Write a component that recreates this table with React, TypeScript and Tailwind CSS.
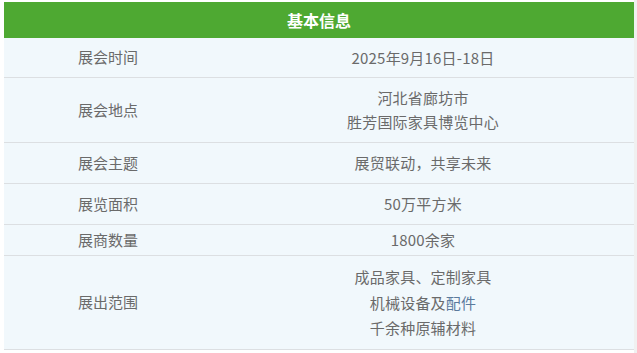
import React from "react";

type Row = { label: string; lines: React.ReactNode[]; h: string; lh: string };

const rows: Row[] = [
  { label: "展会时间", lines: ["2025年9月16日-18日"], h: "h-[40px]", lh: "leading-[24px]" },
  { label: "展会地点", lines: ["河北省廊坊市", "胜芳国际家具博览中心"], h: "h-[65px]", lh: "leading-[24px]" },
  { label: "展会主题", lines: ["展贸联动，共享未来"], h: "h-[41px]", lh: "leading-[24px]" },
  { label: "展览面积", lines: ["50万平方米"], h: "h-[41px]", lh: "leading-[24px]" },
  { label: "展商数量", lines: ["1800余家"], h: "h-[31px]", lh: "leading-[24px]" },
  {
    label: "展出范围",
    lines: [
      "成品家具、定制家具",
      <>
        机械设备及<span className="text-[#5b7a9c]">配件</span>
      </>,
      "千余种原辅材料",
    ],
    h: "h-[94px]",
    lh: "leading-[25.5px]",
  },
];

const App: React.FC = () => {
  return (
    <div
      className="w-[637px] h-[353px] bg-white flex"
      style={{ fontFamily: '"Noto Sans CJK SC", "Noto Sans", sans-serif' }}
    >
      <div className="w-[634px] pl-[4px] pt-[2px]">
        <div className="w-[630px] bg-[#f1f8fc]">
          {/* header */}
          <div className="h-[36px] bg-[#4ea932] flex items-center justify-center text-white font-bold text-[16px]">
            基本信息
          </div>

          {rows.map((r) => (
            <div key={r.label} className={`flex border-b border-[#dcdfe2] ${r.h}`}>
              <div className="w-[208px] flex items-center justify-center text-[15px] text-[#6a6a6a]">
                {r.label}
              </div>
              <div className="flex-1 flex flex-col items-center justify-center text-[15px] text-[#6a6a6a] tracking-[0.2px]">
                {r.lines.map((l, i) => (
                  <div key={i} className={r.lh}>
                    {l}
                  </div>
                ))}
              </div>
            </div>
          ))}
        </div>
      </div>

      {/* scrollbar strip */}
      <div className="w-[3px] bg-[#f0f0f0]" />
    </div>
  );
};

export default App;
